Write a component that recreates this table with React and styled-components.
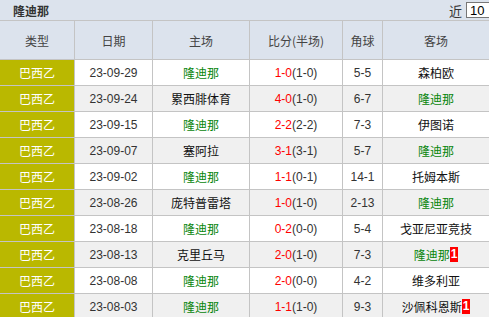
import React from 'react'
import styled, { createGlobalStyle } from 'styled-components'

const Global = createGlobalStyle`
  body {
    margin: 0;
    font-family: "Liberation Sans", Arial, "Noto Sans CJK SC", sans-serif;
    font-size: 12px;
    color: #333;
    background: #fff;
  }
`;

const Panel = styled.section`
  width: 489px;
  height: 317px;
  overflow: hidden;
`;

const TitleBar = styled.div`
  height: 20px;
  display: flex;
  align-items: center;
  justify-content: space-between;
  background: #dce3ed;
  border-bottom: 1px solid #c4c4c4;
  padding: 0 0 0 13px;
  overflow: hidden;
`;

const Title = styled.h2`
  margin: 0;
  font-size: 12px;
  font-weight: bold;
  color: #333;
  font-family: "Noto Sans CJK SC", sans-serif;
`;

const Recent = styled.label`
  display: flex;
  align-items: center;
  gap: 4px;
  margin-right: -12px;
  font-size: 13px;
  color: #333;
  font-family: "Noto Sans CJK SC", sans-serif;
`;

const CountBox = styled.span`
  display: inline-flex;
  align-items: center;
  height: 14px;
  width: 30px;
  padding-left: 3px;
  border: 1px solid #777;
  background: #fff;
  font-family: "Liberation Sans", Arial, sans-serif;
  font-size: 13px;
  color: #000;
`;

const Row = styled.div`
  display: grid;
  grid-template-columns: 75px 78px 97px 93px 40px 1fr;
  height: ${p => (p.$head ? '39px' : '26px')};
  background: ${p => (p.$head ? '#dce3ed' : p.$alt ? '#f0f0f0' : '#fff')};
`;

const Cell = styled.div`
  display: flex;
  align-items: center;
  justify-content: center;
  border-right: 1px solid #c4c4c4;
  border-bottom: 1px solid #c4c4c4;
  white-space: nowrap;
  font-size: 12px;
  color: ${p => (p.$head ? '#444' : '#333')};
  font-family: ${p => (p.$cjk ? '"Noto Sans CJK SC", sans-serif' : '"Liberation Sans", Arial, "Noto Sans CJK SC", sans-serif')};
  &:last-child {
    border-right: none;
  }
`;

const League = styled(Cell)`
  background: #bab800;
  color: #fff;
`;

const Team = styled.span`
  font-family: "Noto Sans CJK SC", sans-serif;
  font-size: 12px;
  color: ${p => (p.$home ? '#07850b' : '#111')};
`;

const Score = styled.span`
  color: #f00;
`;

const Half = styled.span`
  color: #333;
`;

const Badge = styled.span`
  display: inline-block;
  background: #f00;
  color: #fff;
  font-weight: bold;
  font-family: "Liberation Sans", Arial, sans-serif;
  font-size: 12px;
  line-height: 15px;
  padding: 0 1px;
`;

const HOME = '隆迪那';

const matches = [
  ['23-09-29', HOME, '1-0', '1-0', '5-5', '森柏欧'],
  ['23-09-24', '累西腓体育', '4-0', '1-0', '6-7', HOME],
  ['23-09-15', HOME, '2-2', '2-2', '7-3', '伊图诺'],
  ['23-09-07', '塞阿拉', '3-1', '3-1', '5-7', HOME],
  ['23-09-02', HOME, '1-1', '0-1', '14-1', '托姆本斯'],
  ['23-08-26', '庞特普雷塔', '1-0', '1-0', '2-13', HOME],
  ['23-08-18', HOME, '0-2', '0-0', '5-4', '戈亚尼亚竞技'],
  ['23-08-13', '克里丘马', '2-0', '1-0', '7-3', HOME, 1],
  ['23-08-08', HOME, '2-0', '0-0', '4-2', '维多利亚'],
  ['23-08-03', HOME, '1-1', '1-0', '9-3', '沙佩科恩斯', 1],
];

const heads = ['类型', '日期', '主场', '比分(半场)', '角球', '客场'];

export default function App() {
  return (
    <Panel>
      <Global />
      <TitleBar>
        <Title>隆迪那</Title>
        <Recent>
          近<CountBox>10</CountBox>
        </Recent>
      </TitleBar>
      <Row $head>
        {heads.map(h => (
          <Cell key={h} $head $cjk>{h}</Cell>
        ))}
      </Row>
      {matches.map(([date, home, ft, ht, corner, away, red], i) => (
        <Row key={date} $alt={i % 2 === 1}>
          <League $cjk>巴西乙</League>
          <Cell>{date}</Cell>
          <Cell>
            <Team $home={home === HOME}>{home}</Team>
          </Cell>
          <Cell>
            <Score>{ft}</Score>
            <Half>({ht})</Half>
          </Cell>
          <Cell>{corner}</Cell>
          <Cell>
            <Team $home={away === HOME}>{away}</Team>
            {red && <Badge>{red}</Badge>}
          </Cell>
        </Row>
      ))}
    </Panel>
  );
}
